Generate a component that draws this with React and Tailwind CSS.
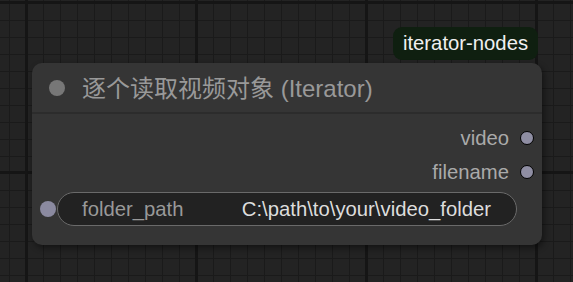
import React from "react";

export default function App() {
  return (
    <div
      className="relative w-[573px] h-[282px] overflow-hidden bg-[#232323] [background-image:linear-gradient(to_right,#151515_3px,transparent_3px),linear-gradient(to_bottom,#151515_3px,transparent_3px),linear-gradient(to_right,#1a1a1a_1px,transparent_1px),linear-gradient(to_bottom,#1a1a1a_1px,transparent_1px)] [background-size:170px_170px,170px_170px,17px_17px,17px_17px] [background-position:25px_1px,25px_1px,9px_3px,9px_3px]"
      style={{ fontFamily: '"Liberation Sans", Arial, "Noto Sans CJK SC", sans-serif' }}
    >
      {/* badge */}
      <div className="absolute left-[393px] top-[27px] h-[33px] w-[145px] rounded-[9px] bg-[#0f1f10] flex items-center justify-center text-[20.3px] leading-none text-[#f0f0f0]">
        iterator-nodes
      </div>

      {/* node */}
      <div className="absolute left-[32px] top-[63px] w-[510px] h-[182px] rounded-[10px] bg-[#353535] shadow-[2px_3px_6px_rgba(0,0,0,0.45)] flex flex-col">
        <div className="h-[51px] flex items-center pl-[17px] border-b-2 border-[#2c2c2c]">
          <div className="w-[16px] h-[16px] rounded-full bg-[#777777]" />
          <div className="ml-[17px] mt-[3px] text-[24px] leading-none text-[#999999]">
            逐个读取视频对象 (Iterator)
          </div>
        </div>

        <div className="flex flex-col pt-[7px]">
          <div className="h-[34px] flex items-center justify-end pr-[8px]">
            <span className="text-[20.3px] leading-none text-[#aaaaaa]">video</span>
            <div className="ml-[11px] w-[14px] h-[14px] rounded-full bg-[#8f8ea3] border-[1.5px] border-black" />
          </div>
          <div className="h-[34px] flex items-center justify-end pr-[8px]">
            <span className="text-[20.3px] leading-none text-[#aaaaaa]">filename</span>
            <div className="ml-[11px] w-[14px] h-[14px] rounded-full bg-[#8f8ea3] border-[1.5px] border-black" />
          </div>
          <div className="mt-[3px] h-[34px] flex items-center pl-[8px] pr-[25px]">
            <div className="w-[16px] h-[16px] rounded-full bg-[#8b8aa0]" />
            <div className="ml-[1px] flex-1 h-[34px] rounded-full border border-[#6a6a6a] bg-[#222222] flex items-center justify-between pl-[24px] pr-[25px] text-[20.3px] leading-none">
              <span className="text-[#999999]">folder_path</span>
              <span className="text-[#dddddd]">C:\path\to\your\video_folder</span>
            </div>
          </div>
        </div>
      </div>
    </div>
  );
}
